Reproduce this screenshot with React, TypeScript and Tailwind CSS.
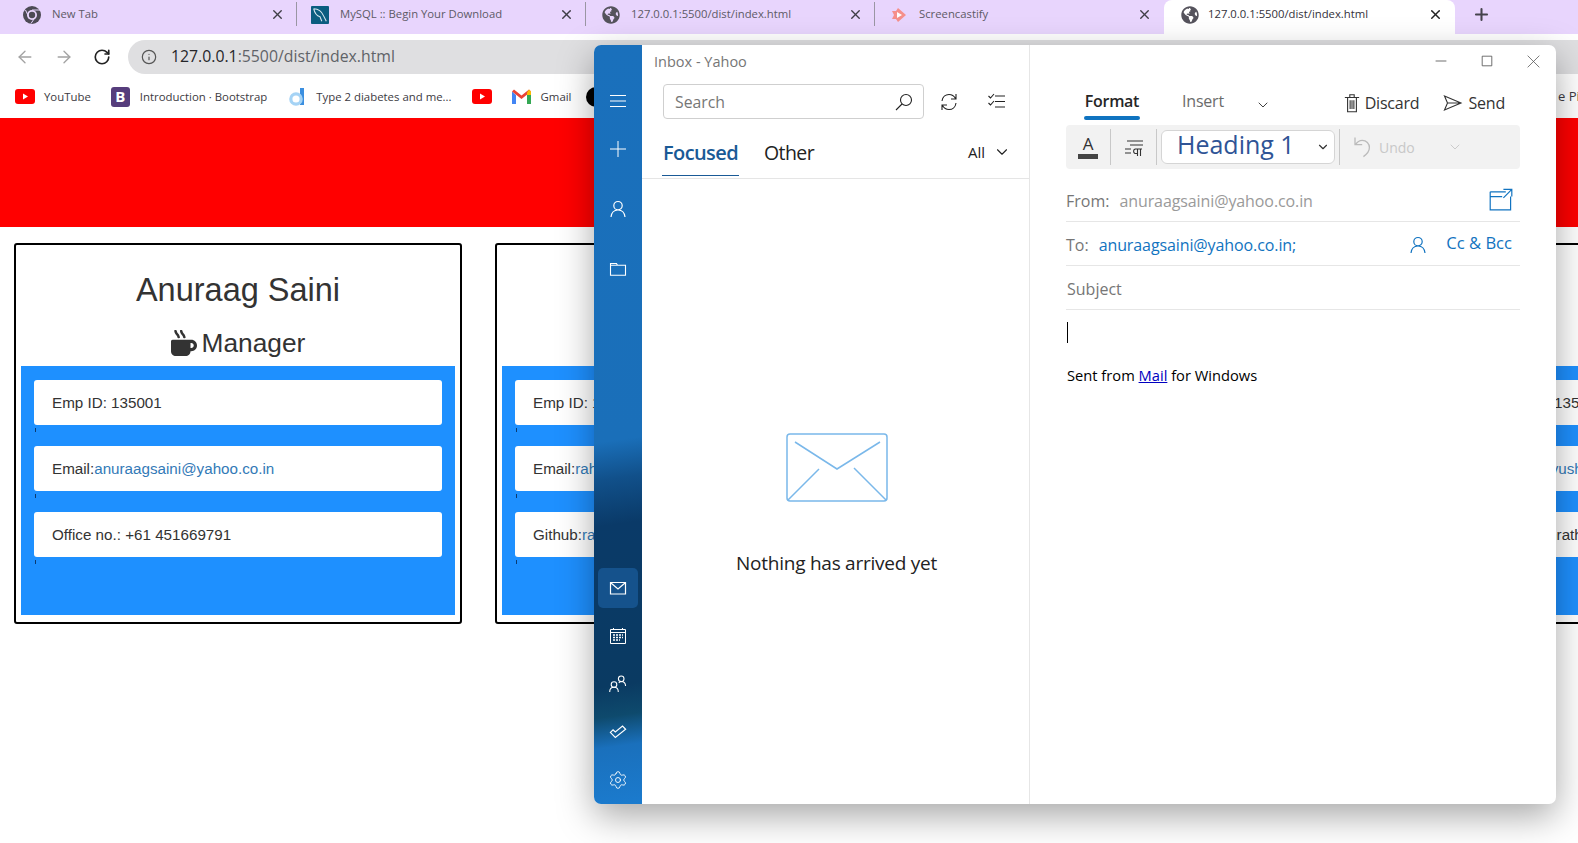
import { FaGlobeAmericas, FaMugHot } from "react-icons/fa";
import { ArrowLeft, ArrowRight, ChevronDown, Info, Plus, RotateCw, Settings, X } from "lucide-react";

type Tab = {
  label: string;
  icon: React.ReactNode;
  width: string;
  active?: boolean;
};

type CardData = {
  heading?: string;
  rows: React.ReactNode[];
};

function ChromeIcon() {
  return (
    <svg width="18" height="18" viewBox="0 0 18 18">
      <circle cx="9" cy="9" r="9" fill="#4d4a55" />
      <circle cx="9" cy="9" r="5" fill="#e8d5fd" />
      <circle cx="9" cy="9" r="3.2" fill="#4d4a55" />
      <path d="M9 4h8M6 11.5 2.5 4M12 11.5 8 17.5" stroke="#e8d5fd" strokeWidth="1" />
    </svg>
  );
}

function MysqlIcon() {
  return (
    <svg width="20" height="20" viewBox="0 0 20 20">
      <rect width="20" height="20" rx="1" fill="#0b5d80" />
      <path d="M3 3c5 0 9 3 11 8l3 6M3 3c1 5 3 8 7 9l2 5" fill="none" stroke="#d7e7ee" strokeWidth="1.2" />
    </svg>
  );
}

function CastifyIcon() {
  return (
    <svg width="18" height="18" viewBox="0 0 18 18">
      <path d="M2 5h4l2-3 8 7-8 7-2-3H2l2-4z" fill="#f58f8a" />
      <path d="M7 6l5 3-5 3z" fill="#fff" />
    </svg>
  );
}

function YoutubeIcon() {
  return (
    <svg width="20" height="15" viewBox="0 0 20 15">
      <rect width="20" height="15" rx="3" fill="#f00" />
      <path d="M8 4.5l5 3-5 3z" fill="#fff" />
    </svg>
  );
}

function GmailIcon() {
  return (
    <svg width="19" height="15" viewBox="0 0 19 15">
      <path d="M0 2.5V15h4V6z" fill="#4285f4" />
      <path d="M19 2.5V15h-4V6z" fill="#34a853" />
      <path d="M0 2.5 2 .5 9.500 6.500 17 .5l2 2-9.500 7.500z" fill="#ea4335" />
      <path d="M15 3.500 17 .5l2 2V6l-4 0z" fill="#fbbc04" />
    </svg>
  );
}

function Line({ d, size = 20, width = 1.2 }: { d: string; size?: number; width?: number }) {
  return (
    <svg width={size} height={size} viewBox="0 0 20 20" fill="none" stroke="currentColor" strokeWidth={width}>
      <path d={d} />
    </svg>
  );
}

const PERSON = "M10 2.500a4.200 4.200 0 1 0 0 8.400a4.200 4.200 0 1 0 0-8.400M3 18c.5-4.500 3-7 7-7s6.500 2.500 7 7";
const SYNC = "M3 9c.5-4 3.500-6.500 7-6.500 3 0 5 1.300 6.500 4M17 2v5h-5M17 11c-.5 4-3.500 6.500-7 6.500-3 0-5-1.300-6.500-4M3 18v-5h5";

const tabs: Tab[] = [
  { label: "New Tab", icon: <ChromeIcon />, width: "w-[297px] pl-[23px]" },
  { label: "MySQL :: Begin Your Download", icon: <MysqlIcon />, width: "w-[289px] pl-[14px]" },
  { label: "127.0.0.1:5500/dist/index.html", icon: <FaGlobeAmericas size={18} color="#55535c" />, width: "w-[289px] pl-[16px]" },
  { label: "Screencastify", icon: <CastifyIcon />, width: "w-[289px] pl-[15px]" },
];

function BrowserTab({ tab, last }: { tab: Tab; last: boolean }) {
  return (
    <div className={`relative flex h-full shrink-0 items-center pr-[12px] pb-[5px] ${tab.width}`}>
      <span className="flex w-[18px] justify-center">{tab.icon}</span>
      <span className="ml-[11px] whitespace-nowrap text-[11.300px] text-[#5d5a66]">{tab.label}</span>
      <X size={15} strokeWidth={2.2} className="ml-auto text-[#3f3d46]" />
      {!last ? <span className="absolute top-[2px] right-0 h-[24px] w-px bg-[#9a96a3]" /> : null}
    </div>
  );
}

function Browser() {
  return (
    <header className="font-['Open_Sans',sans-serif]">
      <div className="flex h-[34px] bg-[#e8d5fd]">
        {tabs.map((tab, index) => (
          <BrowserTab key={tab.label} tab={tab} last={index === tabs.length - 1} />
        ))}
        <div className="flex h-full w-[291px] shrink-0 items-center rounded-t-[8px] bg-white pr-[12px] pb-[5px] pl-[17px]">
          <FaGlobeAmericas size={18} color="#55535c" />
          <span className="ml-[9px] whitespace-nowrap text-[11.300px] text-[#33313a]">127.0.0.1:5500/dist/index.html</span>
          <X size={15} strokeWidth={2.4} className="ml-auto text-[#222]" />
        </div>
        <Plus size={19} strokeWidth={2.6} className="mt-[5px] ml-[17px] text-[#45434c]" />
      </div>
      <div className="flex h-[46px] items-center pl-[15px]">
        <ArrowLeft size={20} strokeWidth={1.6} className="text-[#a3a3a3]" />
        <ArrowRight size={20} strokeWidth={1.6} className="ml-[19px] text-[#a3a3a3]" />
        <RotateCw size={18} strokeWidth={2.2} className="ml-[19px] text-[#222]" />
        <div className="ml-[17px] flex h-[34px] flex-1 items-center rounded-l-full bg-[#dfdfe1] pl-[13px]">
          <Info size={16} strokeWidth={1.8} className="text-[#555]" />
          <span className="ml-[14px] text-[15.800px] text-[#5f6368]">
            <span className="text-[#26262a]">127.0.0.1</span>:5500/dist/index.html
          </span>
        </div>
      </div>
      <div className="flex h-[38px] items-center whitespace-nowrap pb-[5px] pl-[15px] text-[11.400px] text-[#3c3a42]">
        <YoutubeIcon />
        <span className="ml-[9px]">YouTube</span>
        <span className="ml-[20px] flex h-[20px] w-[19px] items-center justify-center rounded-[3px] bg-[#563d7c] text-[15px] font-bold text-white">
          B
        </span>
        <span className="ml-[10px]">Introduction · Bootstrap</span>
        <svg width="16" height="18" viewBox="0 0 16 18" className="ml-[22px]">
          <path d="M11 0h4v17h-4z" fill="#3b8fe0" />
          <circle cx="7" cy="11" r="5.200" fill="none" stroke="#a5d3f5" strokeWidth="3.200" />
        </svg>
        <span className="ml-[11px]">Type 2 diabetes and me...</span>
        <span className="ml-[20px] flex"><YoutubeIcon /></span>
        <span className="ml-[20px] flex"><GmailIcon /></span>
        <span className="ml-[10px]">Gmail</span>
        <span className="ml-[14px] h-[20px] w-[20px] rounded-full bg-black" />
        <span className="ml-auto w-[20px] overflow-hidden text-[13px]">e Pin</span>
      </div>
    </header>
  );
}

function ProfileCard({ heading, rows }: CardData) {
  return (
    <article className="flex h-[381px] w-[448px] shrink-0 flex-col rounded-[3px] border-2 border-black font-['Liberation_Sans',sans-serif] text-[#333]">
      <div className="h-[121px] pt-[22px] text-center">
        {heading ? (
          <>
            <h2 className="text-[32.500px] leading-[46px]">{heading}</h2>
            <div className="mt-[14px] flex items-center justify-center gap-[5px] text-[26.300px] leading-[32px]">
              <FaMugHot size={26} />
              Manager
            </div>
          </>
        ) : null}
      </div>
      <div className="mx-[5px] mb-[7px] flex-1 bg-[#1e90ff] px-[13px] pt-[14px]">
        {rows.map((row, index) => (
          <div key={index}>
            <div className="flex h-[45px] items-center overflow-hidden rounded-[3px] bg-white pt-px pl-[18px] text-[15.200px] whitespace-nowrap">
              {row}
            </div>
            <div className="h-[21px] pt-[3px] pl-px">
              <div className="h-[4px] w-px bg-[#0b3a70]" />
            </div>
          </div>
        ))}
      </div>
    </article>
  );
}

const cards: CardData[] = [
  {
    heading: "Anuraag Saini",
    rows: [
      "Emp ID: 135001",
      <>Email:<span className="text-[#337ab7]">anuraagsaini@yahoo.co.in</span></>,
      "Office no.: +61 451669791",
    ],
  },
  {
    rows: [
      "Emp ID: 1",
      <>Email:<span className="text-[#337ab7]">rah</span></>,
      <>Github:<span className="text-[#337ab7]">ra</span></>,
    ],
  },
  { rows: ["", "", ""] },
  {
    rows: [
      "Emp ID: 135",
      <>Email:<span className="text-[#337ab7]">Piyush</span></>,
      <>Github:<span>mrath</span></>,
    ],
  },
];

function RailButton({ children, active }: { children: React.ReactNode; active?: boolean }) {
  return (
    <div className="flex h-[48px] w-[48px] items-center justify-center">
      <div className={`flex h-[40px] w-[40px] items-center justify-center rounded-[5px] ${active ? "bg-[#15528c]" : ""}`}>
        {children}
      </div>
    </div>
  );
}

function Rail() {
  return (
    <nav className="flex w-[48px] shrink-0 flex-col justify-between bg-[linear-gradient(172deg,#1a70bc_0%,#1a6fb9_52%,#11508a_57%,#0a3a68_63%,#0a3a62_84%,#0e4a6d_88%,#1a70bc_92%,#1b7bce_100%)] pt-[32px] text-white">
      <div>
        <RailButton><Line d="M2 4.500h16M2 10h16M2 15.500h16" width={1} /></RailButton>
        <RailButton><Line d="M10 2v16M2 10h16" width={1} /></RailButton>
        <div className="mt-[12px]"><RailButton><Line d={PERSON} /></RailButton></div>
        <div className="mt-[12px]"><RailButton><Line d="M2.500 4.500h6l1 1.800h8v10h-15zM2.500 6.300h7" width={1.1} /></RailButton></div>
      </div>
      <div>
        <RailButton active><Line d="M2.500 4.500h15v11.500h-15zM3 5l7 6 7-6" /></RailButton>
        <RailButton>
          <svg width="18" height="18" viewBox="0 0 18 18" fill="none" stroke="currentColor">
            <path d="M1.500 2.500h15v14h-15zM1.500 5.500h15M4.500 1v2M13.500 1v2" />
            <path d="M4 8h10M4 10.500h10M4 13h7" strokeWidth="1.600" strokeDasharray="2 1" />
          </svg>
        </RailButton>
        <RailButton>
          <svg width="18" height="18" viewBox="0 0 18 18" fill="none" stroke="currentColor" strokeWidth="1.100">
            <circle cx="5" cy="9.500" r="2.800" />
            <path d="M.700 17c0-3 1.800-4.700 4.300-4.700s4.300 1.700 4.300 4.700" />
            <circle cx="12.200" cy="3.800" r="2.800" />
            <path d="M9.800 8c.6-.9 1.500-1.500 2.500-1.500 2.400 0 4.100 1.600 4.300 4.500" />
          </svg>
        </RailButton>
        <RailButton><Line size={18} d="M1.500 10.500 7 16l11.500-9-3.500-3.500L7 10 4.500 7.500z" width={1.3} /></RailButton>
        <RailButton><Settings size={20} strokeWidth={1.1} /></RailButton>
      </div>
    </nav>
  );
}

function InboxPane() {
  return (
    <section className="flex w-[388px] shrink-0 flex-col border-r border-[#e6e6e6]">
      <div className="h-[39px] pt-[6px] pl-[12px] text-[14.500px] text-[#767676]">Inbox - Yahoo</div>
      <div className="flex items-center pl-[21px]">
        <div className="flex h-[35px] w-[261px] items-center justify-between rounded-[4px] border border-[#cfcfcf] pr-[9px] pl-[11px] text-[15.800px] text-[#767676]">
          <span className="pt-[3px]">Search</span>
          <span className="text-[#222]"><Line size={20} width={1.1} d="M12 2.500a5.500 5.500 0 1 0 0 11a5.500 5.500 0 1 0 0-11M8 12l-6 6" /></span>
        </div>
        <span className="ml-[15px] text-[#222]"><Line d={SYNC} width={1.1} /></span>
        <span className="ml-[28px] text-[#222]"><Line d="M8 4h10M8 9.500h10M8 15h10M1.500 4l2 2 3.500-4M1.500 11l2 2 3.500-4" width={1.1} /></span>
      </div>
      <div className="mt-[16px] flex h-[44px] items-start border-b border-[#e5e5e5] pl-[20px]">
        <div className="flex h-[41px] w-[77px] flex-col items-center justify-start border-b border-[#1a5a96] pt-[3px] text-[20px] font-semibold tracking-[-0.6px] text-[#1a5a96]">
          Focused
        </div>
        <div className="ml-[25px] pt-[3px] text-[19.500px] tracking-[-0.6px] text-[#222]">Other</div>
        <div className="ml-auto flex items-center pt-[6px] pr-[18px] text-[15px] text-[#222]">
          All
          <ChevronDown size={18} strokeWidth={1.5} className="ml-[8px]" />
        </div>
      </div>
      <div className="flex flex-1 flex-col items-center pt-[254px] pl-[2px]">
        <svg width="102" height="69" viewBox="0 0 102 69" fill="none" stroke="#7ab8ea" strokeWidth="1.500">
          <rect x="1" y="1" width="100" height="67" rx="3" />
          <path d="M9 9l42 27 43-27M33 36 2 67M68 35l32 32" />
        </svg>
        <p className="mt-[47px] text-[19px] tracking-[-0.25px] text-[#222]">Nothing has arrived yet</p>
      </div>
    </section>
  );
}

function ComposeRow({ children, tall }: { children: React.ReactNode; tall?: boolean }) {
  return (
    <div className={`flex items-center border-b border-[#e6e6e6] ${tall ? "h-[53px] pt-[11px]" : "h-[44px] pt-[2px]"}`}>
      {children}
    </div>
  );
}

function ComposePane() {
  return (
    <section className="flex flex-1 flex-col px-[36px]">
      <div className="-mr-[36px] flex h-[32px] justify-end text-[#555]">
        <div className="flex w-[46px] items-center justify-center"><Line size={12} width={1.4} d="M1 10h18" /></div>
        <div className="flex w-[46px] items-center justify-center"><Line size={12} width={1.400} d="M2 2h16v16H2z" /></div>
        <div className="flex w-[46px] items-center justify-center"><Line size={13} width={1.2} d="M1 1l18 18M19 1 1 19" /></div>
      </div>
      <div className="flex h-[48px] items-start pt-[12px] text-[16px]">
        <div className="ml-[18px] flex w-[56px] flex-col items-center font-semibold text-[#262626]">
          <span className="tracking-[-0.3px]">Format</span>
          <span className="mt-[3px] h-[4px] w-full rounded-full bg-[#0f73c0]" />
        </div>
        <span className="ml-[42px] tracking-[-0.2px] text-[#6b6b6b]">Insert</span>
        <ChevronDown size={16} strokeWidth={1.4} className="mt-[8px] ml-[31px] text-[#333]" />
        <div className="mt-[2px] mr-[15px] ml-auto flex items-center text-[#333]">
          <Line size={22} d="M6 5v13h8V5M3.500 5h13M8 5V2.500h4V5M8.300 7.500v8M10 7.500v8M11.700 7.500v8" width={1} />
          <span className="ml-[2px] tracking-[-0.2px]">Discard</span>
          <span className="ml-[24px]"><Line d="M1.500 3 18 10 1.500 17 4.500 10zM4.500 10H18" width={1.1} /></span>
          <span className="ml-[5px] tracking-[-0.2px]">Send</span>
        </div>
      </div>
      <div className="flex h-[44px] items-center rounded-[4px] bg-[#f2f2f2] text-[#333]">
        <div className="ml-[12px] flex w-[20px] flex-col items-center">
          <span className="text-[17px] leading-[16px]">A</span>
          <span className="mt-[2px] h-[5px] w-[20px] bg-[#444]" />
        </div>
        <span className="ml-[12px] h-[36px] w-px bg-[#c8c8c8]" />
        <span className="ml-[13px]"><Line d="M3 4h16M6 8h13M1 12h6M1 16h6M11 12h7M13.500 12v7M16.500 12v7M11 12a2.500 2.500 0 0 0 0 4.500h2.500" width={1.1} /></span>
        <span className="ml-[12px] h-[36px] w-px bg-[#c8c8c8]" />
        <div className="ml-[4px] flex h-[34px] w-[174px] items-center justify-between rounded-[6px] border border-[#d5d5d5] bg-white pr-[4px] pl-[15px] text-[25px] text-[#2f5496]">
          <span className="pb-[5px]">Heading 1</span>
          <ChevronDown size={14} strokeWidth={2} className="text-[#333]" />
        </div>
        <span className="ml-[4px] h-[36px] w-px bg-[#c8c8c8]" />
        <span className="ml-[9px] text-[#bbb]"><Line size={24} d="M5 2v6h6M5.500 8C7 5.500 9 4.500 11 4.500c3.500 0 6 2.500 6 6 0 3-2 5.500-5 7.500" width={1.1} /></span>
        <span className="ml-[6px] text-[14px] text-[#c8c8c8]">Undo</span>
        <ChevronDown size={16} strokeWidth={1.4} className="ml-[32px] text-[#c8c8c8]" />
      </div>
      <ComposeRow tall>
        <span className="text-[#767676]">From:</span>
        <span className="ml-[10px] tracking-[-0.1px] text-[#9a9a9a]">anuraagsaini@yahoo.co.in</span>
        <span className="mr-[7px] mb-[4px] ml-auto text-[#1173c0]"><Line size={24} width={1} d="M1 4h13M1 4v15h17V8M1 8h10M12 2h7v6M19 2l-7 7" /></span>
      </ComposeRow>
      <ComposeRow>
        <span className="text-[#767676]">To:</span>
        <span className="ml-[10px] tracking-[-0.1px] text-[#1173c0]">anuraagsaini@yahoo.co.in;</span>
        <span className="ml-auto text-[#1173c0]"><Line size={20} d={PERSON} /></span>
        <span className="mr-[8px] mb-[3px] ml-[18px] text-[16.600px] text-[#1173c0]">Cc &amp; Bcc</span>
      </ComposeRow>
      <ComposeRow>
        <span className="pl-px text-[#767676]">Subject</span>
      </ComposeRow>
      <div className="mt-[12px] ml-px h-[21px] w-px bg-black" />
      <p className="mt-[21px] pl-px text-[14.700px] text-black">
        Sent from <span className="text-[#0000c0] underline">Mail</span> for Windows
      </p>
    </section>
  );
}

export default function App() {
  return (
    <div className="relative h-[843px] w-[1578px] overflow-hidden bg-white">
      <Browser />
      <div className="h-[109px] bg-[#f00]" />
      <main className="mt-[16px] flex gap-[33px] pl-[14px]">
        {cards.map((card, index) => (
          <ProfileCard key={index} {...card} />
        ))}
      </main>
      <div className="absolute top-[45px] left-[594px] flex h-[759px] w-[962px] overflow-hidden rounded-[7px] bg-white font-['Open_Sans',sans-serif] text-[16px] shadow-[0_12px_36px_rgba(0,0,0,0.35)]">
        <Rail />
        <InboxPane />
        <ComposePane />
      </div>
    </div>
  );
}
